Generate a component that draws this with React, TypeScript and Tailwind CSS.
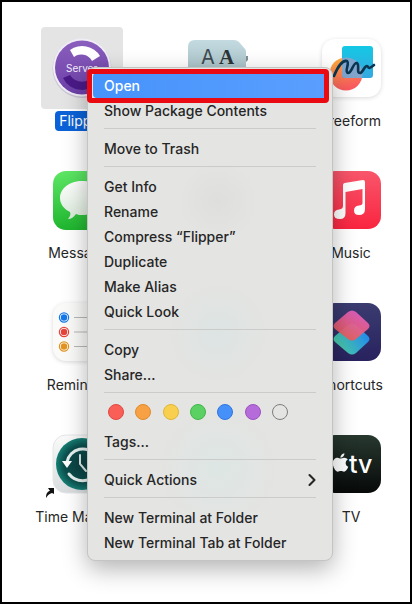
import React from 'react';
import { FaApple } from 'react-icons/fa';
import { FiChevronRight } from 'react-icons/fi';

const FlipperIcon = () => (
  <svg viewBox="0 0 60 60" className="size-[60px]">
    <defs>
      <linearGradient id="flipper" x1="0" y1="0" x2="0" y2="1">
        <stop offset="0" stopColor="#8a5fbd" />
        <stop offset="1" stopColor="#6c3fa8" />
      </linearGradient>
    </defs>
    <circle cx="30" cy="30.5" r="29.5" fill="#c9c4d2" />
    <circle cx="30" cy="29.5" r="29" fill="#f1edf6" />
    <circle cx="30" cy="29.5" r="27" fill="url(#flipper)" />
    <path d="M18 12 A21 21 0 0 1 48 18 L40 23 A12 12 0 0 0 22 19 Z" fill="#fff" />
    <path d="M11 40 L18 37 A14 14 0 0 0 42 37 L49 40 A21 21 0 0 1 11 40 Z" fill="#4a1a87" />
    <text x="14" y="34" fontSize="10" fill="#f3ecfb" fontFamily="Inter, sans-serif">
      Server
    </text>
  </svg>
);

const FontBookIcon = () => (
  <svg viewBox="0 0 60 60" className="size-[60px] overflow-visible">
    <defs>
      <linearGradient id="book" x1="0" y1="0" x2="0" y2="1">
        <stop offset="0" stopColor="#c3dbe0" />
        <stop offset="1" stopColor="#93adb3" />
      </linearGradient>
    </defs>
    <path d="M57 18 L61 18 V22 L59 24 V52 H55 Z" fill="#7f9095" />
    <path d="M8 2 H47 Q50 2 52 4 L58 11 Q59 12 59 14 V56 H1 V9 Q1 2 8 2 Z" fill="url(#book)" />
    <text x="14" y="26" fontSize="20" fill="#3f4b50" fontFamily="Inter, sans-serif">
      A
    </text>
    <text x="32" y="26" fontSize="21" fontWeight="700" fill="#2c3438" fontFamily="'Liberation Serif', serif">
      A
    </text>
  </svg>
);

const FreeformIcon = () => (
  <svg viewBox="0 0 60 60" className="size-[60px] overflow-visible drop-shadow-sm">
    <defs>
      <linearGradient id="sun" x1="0" y1="0" x2="0.3" y2="1">
        <stop offset="0" stopColor="#fbb13c" />
        <stop offset="1" stopColor="#fb5b5f" />
      </linearGradient>
      <linearGradient id="note" x1="0" y1="0" x2="0" y2="1">
        <stop offset="0" stopColor="#14c8e4" />
        <stop offset="1" stopColor="#36a8e0" />
      </linearGradient>
      <clipPath id="noteClip">
        <rect x="21" y="8" width="31" height="32" rx="3" />
      </clipPath>
    </defs>
    <rect x="1" y="1" width="59" height="58" rx="13" fill="#fff" />
    <circle cx="25" cy="36" r="16.5" fill="url(#sun)" />
    <rect x="21" y="8" width="31" height="32" rx="3" fill="url(#note)" />
    <circle cx="25" cy="36" r="16.5" fill="#8fa3c9" opacity="0.85" clipPath="url(#noteClip)" />
    <path
      d="M13 38 C17 28 22 22 26 23 C29 25 23 34 27 35 C31 35 32 24 36 25 C39 27 35 35 39 35 C42 35 43 28 46 28 C48 28 46 33 53 27"
      fill="none"
      stroke="#0b3550"
      strokeWidth="2.6"
      strokeLinecap="round"
    />
  </svg>
);

const MessagesIcon = () => (
  <svg viewBox="0 0 60 60" className="size-[60px]">
    <defs>
      <linearGradient id="msg" x1="0" y1="0" x2="0" y2="1">
        <stop offset="0" stopColor="#5de765" />
        <stop offset="1" stopColor="#1fb52f" />
      </linearGradient>
      <linearGradient id="bubble" x1="0" y1="0" x2="0" y2="1">
        <stop offset="0" stopColor="#fff" />
        <stop offset="1" stopColor="#d9ead9" />
      </linearGradient>
    </defs>
    <rect x="1" y="1" width="59" height="59" rx="13" fill="url(#msg)" />
    <path
      d="M30 11 C42 11 52 18 52 28 C52 38 42 45 30 45 C28 45 26 45 24 44 C22 47 19 49 16 49 C18 47 19 44 18 42 C12 39 8 34 8 28 C8 18 18 11 30 11 Z"
      fill="url(#bubble)"
    />
  </svg>
);

const MusicIcon = () => (
  <svg viewBox="0 0 60 60" className="size-[60px]">
    <defs>
      <linearGradient id="music" x1="0" y1="0" x2="0" y2="1">
        <stop offset="0" stopColor="#f8566b" />
        <stop offset="1" stopColor="#fa2540" />
      </linearGradient>
    </defs>
    <rect x="1" y="1" width="59" height="58" rx="13" fill="url(#music)" />
    <path
      d="M22 15 Q22 13.5 23.5 13 L42 10 Q44 10 44 12 V39 Q44 45 38 45 Q33 45 33 40.5 Q33 36 38 35.5 Q41.5 35 41.5 33 V19 L24.5 22 V43 Q24.5 49 19 49 Q13 49 13 44.5 Q13 40 18 39.5 Q22 39 22 36 Z"
      fill="#fff"
    />
  </svg>
);

const RemindersIcon = () => (
  <svg viewBox="0 0 60 60" className="size-[60px] overflow-visible drop-shadow-sm">
    <rect x="1" y="1" width="59" height="58" rx="13" fill="#fafaf9" />
    {[
      { y: 15.5, color: '#1478ea' },
      { y: 30, color: '#e5453c' },
      { y: 44.5, color: '#e39420' },
    ].map((row) => (
      <g key={row.color}>
        <circle cx="12" cy={row.y} r="4.6" fill="#fff" stroke={row.color} strokeWidth="1.2" />
        <circle cx="12" cy={row.y} r="3.2" fill={row.color} />
        <path d={`M22 ${row.y} H56`} stroke="#b8b8b8" strokeWidth="1.2" />
      </g>
    ))}
  </svg>
);

const ShortcutsIcon = () => (
  <svg viewBox="0 0 60 60" className="size-[60px]">
    <defs>
      <linearGradient id="shTile" x1="0" y1="0" x2="0" y2="1">
        <stop offset="0" stopColor="#3b3c70" />
        <stop offset="1" stopColor="#28225f" />
      </linearGradient>
      <linearGradient id="shTop" x1="0.7" y1="0" x2="0.2" y2="1">
        <stop offset="0" stopColor="#e35fc4" />
        <stop offset="0.5" stopColor="#ea5f86" />
        <stop offset="1" stopColor="#ee5c4c" />
      </linearGradient>
      <linearGradient id="shBottom" x1="0" y1="0.8" x2="1" y2="0.3">
        <stop offset="0" stopColor="#4fd6a0" />
        <stop offset="1" stopColor="#1f84f0" />
      </linearGradient>
    </defs>
    <rect x="1" y="1" width="59" height="58" rx="13" fill="url(#shTile)" />
    <path d="M27 23 Q31 20 35 23 L47 34 Q50 37 47 40 L35 51 Q31 54 27 51 L14 40 Q11 37 14 34 Z" fill="url(#shBottom)" />
    <path
      d="M27 10 Q31 7 35 10 L47 21 Q50 24 47 27 L35 37 Q31 40 27 37 L14 27 Q11 24 14 21 Z"
      fill="url(#shTop)"
      opacity="0.93"
    />
  </svg>
);

const TimeMachineIcon = () => (
  <svg viewBox="0 0 60 60" className="size-[60px] overflow-visible">
    <defs>
      <linearGradient id="tmTile" x1="0" y1="0" x2="0" y2="1">
        <stop offset="0" stopColor="#fafafa" />
        <stop offset="1" stopColor="#d9dcde" />
      </linearGradient>
      <radialGradient id="tm">
        <stop offset="0" stopColor="#0d3d40" />
        <stop offset="0.7" stopColor="#0c4f4e" />
        <stop offset="1" stopColor="#157f74" />
      </radialGradient>
    </defs>
    <rect x="1" y="1" width="59" height="58" rx="13" fill="url(#tmTile)" stroke="#e4e6e7" />
    <circle cx="30" cy="30" r="26" fill="url(#tm)" />
    <path d="M15 28 A16 16 0 0 1 44 22" fill="none" stroke="#e6f1ef" strokeWidth="3" strokeLinecap="round" />
    <path d="M17 40 A17 17 0 0 0 44 40" fill="none" stroke="#e6f1ef" strokeWidth="3" strokeLinecap="round" />
    <path d="M10 27 L20 27 L15 34 Z" fill="#fff" />
    <path d="M28 21 V30 L34 37" fill="none" stroke="#d9e8e6" strokeWidth="2" strokeLinecap="round" />
    <path d="M-6 64 C-6 59 -4 57 -2 57 L-4 54 L2 54 L2 60 L0 59 C-3 60 -4 61 -6 64 Z" fill="#111" />
  </svg>
);

const TvIcon = () => (
  <svg viewBox="0 0 60 60" className="size-[60px]">
    <defs>
      <linearGradient id="tv" x1="0" y1="0" x2="0" y2="1">
        <stop offset="0" stopColor="#27382f" />
        <stop offset="1" stopColor="#070909" />
      </linearGradient>
    </defs>
    <rect x="1" y="1" width="59" height="58" rx="13" fill="url(#tv)" />
    <FaApple x="9" y="18" size="21" color="#fff" />
    <text x="28" y="39" fontSize="25" fontWeight="500" fill="#fff" fontFamily="Inter, sans-serif">
      tv
    </text>
  </svg>
);

interface App {
  name: string;
  icon?: React.ReactNode;
  selected?: boolean;
}

const apps: App[] = [
  { name: 'Flipper', icon: <FlipperIcon />, selected: true },
  { name: '', icon: <FontBookIcon /> },
  { name: 'Freeform', icon: <FreeformIcon /> },
  { name: 'Messages', icon: <MessagesIcon /> },
  { name: '' },
  { name: 'Music', icon: <MusicIcon /> },
  { name: 'Reminders', icon: <RemindersIcon /> },
  { name: '' },
  { name: 'Shortcuts', icon: <ShortcutsIcon /> },
  { name: 'Time Machine', icon: <TimeMachineIcon /> },
  { name: '' },
  { name: 'TV', icon: <TvIcon /> },
];

const tags = [
  { name: 'Red', style: 'bg-[#f95f57] border-[#e0483f]' },
  { name: 'Orange', style: 'bg-[#f8a144] border-[#e18a2c]' },
  { name: 'Yellow', style: 'bg-[#f8cf4e] border-[#e0b636]' },
  { name: 'Green', style: 'bg-[#5bd163] border-[#41b549]' },
  { name: 'Blue', style: 'bg-[#4690fa] border-[#2f76e0]' },
  { name: 'Purple', style: 'bg-[#b66bdb] border-[#9c52c2]' },
  { name: 'No color', style: 'border-[#7d7d7c]' },
];

const MenuItem = ({ label, submenu }: { label: string; submenu?: boolean }) => (
  <button role="menuitem" className="flex h-[25px] w-full items-center justify-between pl-4 pr-2.5 text-left">
    {label}
    {submenu && <FiChevronRight className="size-5" strokeWidth={2.5} />}
  </button>
);

const Separator = () => <hr className="mx-4 mb-[7px] mt-[5px] border-t border-[#cbcbc9]" />;

const ContextMenu = () => (
  <div
    role="menu"
    className="absolute left-[85px] top-[65px] w-[246px] rounded-lg border border-[#c4c4c2] bg-[#e4e4e2] bg-[radial-gradient(circle_at_130px_265px,#dce4e3_0,transparent_50px),radial-gradient(circle_at_130px_400px,#dde6e4_0,transparent_60px),radial-gradient(circle_at_130px_133px,#dededc_0,transparent_40px)] py-[5px] text-sm font-medium text-[#262626] shadow-[0_8px_24px_rgba(0,0,0,0.3)]"
  >
    <button
      role="menuitem"
      className="relative flex h-[25px] w-full items-center pl-4 text-left text-white before:absolute before:inset-y-0 before:left-[5px] before:right-[5px] before:rounded before:bg-linear-to-r before:from-[#4693fb] before:to-[#5a9fff] after:absolute after:-left-px after:-top-1 after:h-[34px] after:w-[242px] after:rounded-sm after:border-[5px] after:border-[#ea0a12]"
    >
      <span className="relative">Open</span>
    </button>
    <MenuItem label="Show Package Contents" />
    <Separator />
    <MenuItem label="Move to Trash" />
    <Separator />
    <MenuItem label="Get Info" />
    <MenuItem label="Rename" />
    <MenuItem label="Compress “Flipper”" />
    <MenuItem label="Duplicate" />
    <MenuItem label="Make Alias" />
    <MenuItem label="Quick Look" />
    <Separator />
    <MenuItem label="Copy" />
    <MenuItem label="Share..." />
    <Separator />
    <div className="flex h-[29px] justify-between pl-5 pr-11 pt-1">
      {tags.map((tag) => (
        <button key={tag.name} aria-label={tag.name} className={`size-4 rounded-full border ${tag.style}`} />
      ))}
    </div>
    <MenuItem label="Tags..." />
    <Separator />
    <MenuItem label="Quick Actions" submenu />
    <Separator />
    <MenuItem label="New Terminal at Folder" />
    <MenuItem label="New Terminal Tab at Folder" />
  </div>
);

const App: React.FC = () => {
  return (
    <main className="relative min-h-screen overflow-hidden border-2 border-black bg-white pl-[39px] pr-[18px] pt-[25px] font-['Inter',sans-serif]">
      <div className="grid grid-cols-[repeat(3,82px)] justify-between gap-y-7">
        {apps.map((app, i) => (
          <div key={i} className="flex flex-col items-center gap-0.5">
            <div
              className={`flex size-[82px] items-center justify-center rounded ${app.selected ? 'bg-[#e4e4e4]' : ''}`}
            >
              {app.icon}
            </div>
            <span
              className={`h-5 whitespace-nowrap rounded px-1 text-sm leading-5 ${
                app.selected ? 'bg-[#0b62d8] text-white' : 'text-[#262626]'
              }`}
            >
              {app.name}
            </span>
          </div>
        ))}
      </div>
      <ContextMenu />
    </main>
  );
};

export default App;
